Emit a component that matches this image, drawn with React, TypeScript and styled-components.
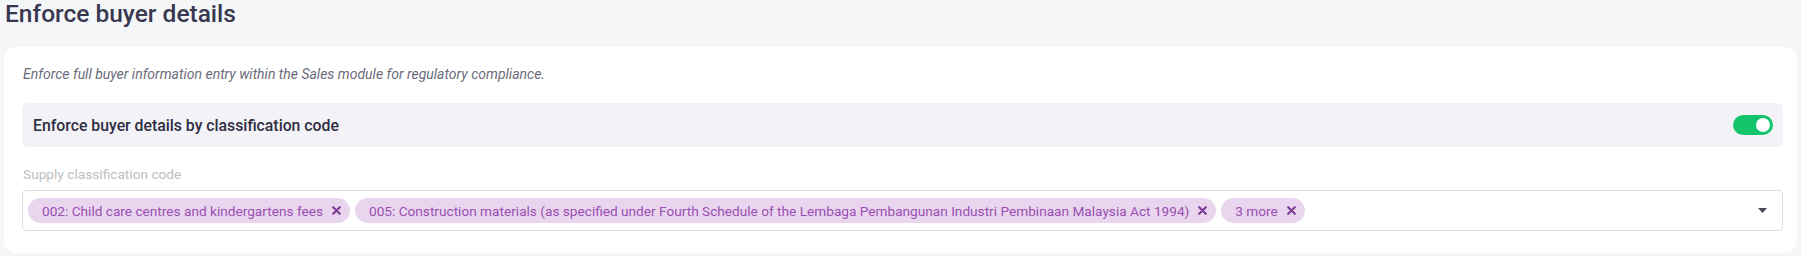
import React, { useState } from "react";
import styled, { createGlobalStyle } from "styled-components";

const GlobalStyle = createGlobalStyle`
  body {
    margin: 0;
    background: #f4f6f8;
    font-family: Roboto, "Liberation Sans", sans-serif;
  }
`;

const Wrapper = styled.div`
  padding: 0 4px;
`;

const Title = styled.h2`
  margin: 0 0 19px 1px;
  font-size: 24.5px;
  line-height: 28px;
  font-weight: 500;
  color: #3a3850;
`;

const Card = styled.div`
  background: #fff;
  border-radius: 12px;
  padding: 19px 14px 22px 18px;
`;

const Description = styled.p`
  margin: 0 0 21px 1px;
  font-size: 14px;
  line-height: 16px;
  font-style: italic;
  color: #6c6b7c;
`;

const ToggleRow = styled.div`
  height: 44px;
  display: flex;
  align-items: center;
  justify-content: space-between;
  padding: 0 10px 0 11px;
  background: #f3f2f7;
  border-radius: 6px;
`;

const RowLabel = styled.span`
  font-size: 15.8px;
  font-weight: 500;
  color: #2e2d42;
`;

const Switch = styled.button<{ $on: boolean }>`
  width: 40px;
  height: 20px;
  border: none;
  padding: 3px;
  border-radius: 10px;
  background: ${(p) => (p.$on ? "#14c46a" : "#cfcfd8")};
  display: flex;
  justify-content: ${(p) => (p.$on ? "flex-end" : "flex-start")};
  cursor: pointer;
`;

const Knob = styled.span`
  width: 14px;
  height: 14px;
  border-radius: 50%;
  background: #fff;
`;

const Field = styled.div`
  margin-top: 19px;
`;

const FieldLabel = styled.div`
  margin-left: 1px;
  font-size: 13.7px;
  line-height: 16px;
  color: #bdbdc2;
  margin-bottom: 8px;
`;

const Select = styled.div`
  height: 41px;
  box-sizing: border-box;
  border: 1px solid #dedee2;
  border-radius: 4px;
  padding: 0 15px 0 5px;
  display: flex;
  align-items: center;
  gap: 5px;
`;

const Chip = styled.span`
  height: 25px;
  display: inline-flex;
  align-items: center;
  gap: 9px;
  padding: 0 9px 0 14px;
  border-radius: 12.5px;
  background: #e9d6ee;
  color: #9a4fb2;
  font-size: 13.65px;
  white-space: nowrap;
`;

const Remove = styled.svg`
  width: 9px;
  height: 9px;
  flex: none;
`;

const Spacer = styled.div`
  flex: 1;
`;

const chips = [
  "002: Child care centres and kindergartens fees",
  "005: Construction materials (as specified under Fourth Schedule of the Lembaga Pembangunan Industri Pembinaan Malaysia Act 1994)",
  "3 more",
];

function App() {
  const [on, setOn] = useState(true);

  return (
    <Wrapper>
      <GlobalStyle />
      <Title>Enforce buyer details</Title>
      <Card>
        <Description>
          Enforce full buyer information entry within the Sales module for
          regulatory compliance.
        </Description>
        <ToggleRow>
          <RowLabel>Enforce buyer details by classification code</RowLabel>
          <Switch $on={on} onClick={() => setOn(!on)} aria-pressed={on}>
            <Knob />
          </Switch>
        </ToggleRow>
        <Field>
          <FieldLabel>Supply classification code</FieldLabel>
          <Select>
            {chips.map((c) => (
              <Chip key={c}>
                {c}
                <Remove viewBox="0 0 9 9">
                  <path
                    d="M1.2 1.2L7.8 7.8M7.8 1.2L1.2 7.8"
                    stroke="#7e3a99"
                    strokeWidth="2.1"
                    strokeLinecap="round"
                  />
                </Remove>
              </Chip>
            ))}
            <Spacer />
            <svg width="9" height="5" viewBox="0 0 9 5">
              <path d="M0 0H9L4.5 5Z" fill="#4a4a55" />
            </svg>
          </Select>
        </Field>
      </Card>
    </Wrapper>
  );
}

export default App;
